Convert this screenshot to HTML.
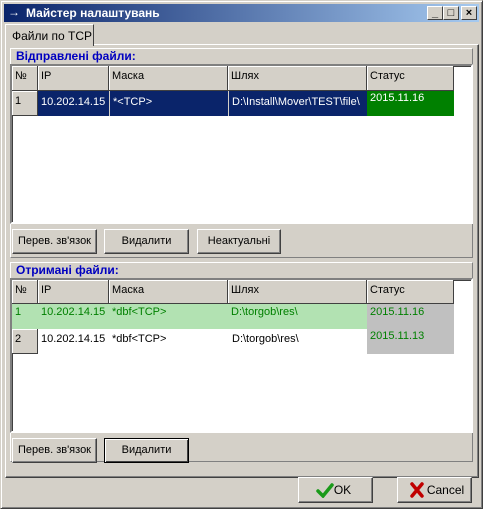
<!DOCTYPE html>
<html><head><meta charset="utf-8"><style>
*{box-sizing:border-box;margin:0;padding:0}
body{width:483px;height:509px;background:#d4d0c8;font-family:"Liberation Sans",sans-serif;font-size:11px;position:relative;overflow:hidden;color:#000}
.a{position:absolute}
.title{left:4px;top:4px;width:475px;height:18px;background:linear-gradient(to right,#0a246a,#a6caf0);color:#fff;font-weight:bold;font-size:12px;line-height:18px;padding-left:22px}
.wb{width:16px;height:14px;top:6px;background:#d4d0c8;border:1px solid;border-color:#fff #404040 #404040 #fff;color:#000;font-size:11px;font-weight:bold;text-align:center;line-height:12px}
.sunk{border:1px solid;border-color:#808080 #fff #fff #808080}
.raised{border:1px solid;border-color:#fff #404040 #404040 #fff}
.btn{background:#d4d0c8;border:1px solid;border-color:#fff #404040 #404040 #fff;text-align:center;line-height:22px;height:25px;box-shadow:inset -1px -1px #808080}
.lbl{color:#0000c0;font-weight:bold;font-size:12px}
.grid{background:#fff;border:2px solid;border-color:#808080 #fff #fff #808080;box-shadow:inset 1px 1px #404040}
.c{position:absolute;padding-left:3px;white-space:nowrap;overflow:hidden;line-height:20px}
.h{background:#d4d0c8;border-right:1px solid #404040;border-bottom:1px solid #404040;box-shadow:inset 1px 1px #fff}
</style></head><body>
<div class="a" style="left:0;top:0;width:483px;height:509px;border:1px solid;border-color:#d4d0c8 #404040 #404040 #d4d0c8;box-shadow:inset 1px 1px #fff,inset -1px -1px #808080"></div>
<div class="a title">Майстер налаштувань</div>
<div class="a" style="left:8px;top:5px;color:#fff;font-weight:bold;font-size:12px">→</div>
<div class="a wb" style="left:427px">_</div>
<div class="a wb" style="left:443px">□</div>
<div class="a wb" style="left:461px">×</div>
<!-- tab page -->
<div class="a" style="left:5px;top:44px;width:474px;height:434px;border:1px solid;border-color:#fff #404040 #404040 #fff;box-shadow:inset -1px -1px #808080"></div>
<div class="a" style="left:5px;top:24px;width:89px;height:22px;background:#d4d0c8;border:1px solid;border-color:#fff #404040 transparent #fff;border-bottom:none;padding:4px 0 0 6px;font-size:12px">Файли по TCP</div>
<!-- group 1 -->
<div class="a" style="left:10px;top:48px;width:463px;height:210px;border:1px solid;border-color:#fff #808080 #808080 #fff"></div>
<div class="a lbl" style="left:16px;top:49px">Відправлені файли:</div>
<div class="a grid" style="left:10px;top:64px;width:463px;height:160px">
<div class="c h" style="left:0;top:0;width:26px;height:25px">№</div>
<div class="c h" style="left:26px;top:0;width:71px;height:25px">IP</div>
<div class="c h" style="left:97px;top:0;width:119px;height:25px">Маска</div>
<div class="c h" style="left:216px;top:0;width:139px;height:25px">Шлях</div>
<div class="c h" style="left:355px;top:0;width:87px;height:25px">Статус</div>
<div class="c h" style="left:0;top:25px;width:26px;height:25px">1</div>
<div class="c" style="left:26px;top:25px;width:71px;height:25px;background:#0a246a;color:#fff;line-height:22px">10.202.14.15</div>
<div class="c" style="left:97px;top:25px;width:119px;height:25px;background:#0a246a;color:#fff;border-left:1px solid #d4d0c8;line-height:22px">*&lt;TCP&gt;</div>
<div class="c" style="left:216px;top:25px;width:139px;height:25px;background:#0a246a;color:#fff;border-left:1px solid #d4d0c8;line-height:22px">D:\Install\Mover\TEST\file\</div>
<div class="c" style="left:355px;top:25px;width:87px;height:25px;background:#008000;color:#fff;line-height:14px">2015.11.16</div>
</div>
<div class="a btn" style="left:12px;top:229px;width:85px">Перев. зв'язок</div>
<div class="a btn" style="left:104px;top:229px;width:85px">Видалити</div>
<div class="a btn" style="left:197px;top:229px;width:84px">Неактуальні</div>
<!-- group 2 -->
<div class="a" style="left:10px;top:262px;width:463px;height:200px;border:1px solid;border-color:#fff #808080 #808080 #fff"></div>
<div class="a lbl" style="left:16px;top:263px">Отримані файли:</div>
<div class="a grid" style="left:10px;top:278px;width:463px;height:155px">
<div class="c h" style="left:0;top:0;width:26px;height:24px">№</div>
<div class="c h" style="left:26px;top:0;width:71px;height:24px">IP</div>
<div class="c h" style="left:97px;top:0;width:119px;height:24px">Маска</div>
<div class="c h" style="left:216px;top:0;width:139px;height:24px">Шлях</div>
<div class="c h" style="left:355px;top:0;width:87px;height:24px">Статус</div>
<div class="c" style="left:0;top:24px;width:355px;height:25px;background:#b2e2b2"></div>
<div class="c" style="left:0;top:24px;width:26px;height:25px;color:#008000;line-height:16px">1</div>
<div class="c" style="left:26px;top:24px;width:71px;height:25px;color:#008000;line-height:16px">10.202.14.15</div>
<div class="c" style="left:97px;top:24px;width:119px;height:25px;color:#008000;line-height:16px">*dbf&lt;TCP&gt;</div>
<div class="c" style="left:216px;top:24px;width:139px;height:25px;color:#008000;line-height:16px">D:\torgob\res\</div>
<div class="c" style="left:355px;top:24px;width:87px;height:50px;background:#c0c0c0"></div>
<div class="c" style="left:355px;top:24px;width:87px;height:25px;color:#008000;line-height:16px">2015.11.16</div>
<div class="c h" style="left:0;top:49px;width:26px;height:25px">2</div>
<div class="c" style="left:26px;top:49px;width:71px;height:25px">10.202.14.15</div>
<div class="c" style="left:97px;top:49px;width:119px;height:25px">*dbf&lt;TCP&gt;</div>
<div class="c" style="left:216px;top:49px;width:139px;height:25px;padding-left:4px">D:\torgob\res\</div>
<div class="c" style="left:355px;top:49px;width:87px;height:25px;color:#008000;line-height:14px">2015.11.13</div>
</div>
<div class="a btn" style="left:12px;top:438px;width:85px">Перев. зв'язок</div>
<div class="a btn" style="left:104px;top:438px;width:85px;border:1px solid #000;box-shadow:inset 1px 1px #fff,inset -1px -1px #404040">Видалити</div>
<!-- OK / Cancel -->
<div class="a btn" style="left:298px;top:477px;width:75px;height:26px;line-height:24px;padding-left:14px;font-size:12px">OK</div>
<svg class="a" style="left:316px;top:482px" width="18" height="16"><path d="M2 9 L7 14 L16 3" stroke="#1a9a1a" stroke-width="3.5" fill="none" stroke-linecap="round"/></svg>
<div class="a btn" style="left:397px;top:477px;width:75px;height:26px;line-height:24px;padding-left:22px;font-size:12px">Cancel</div>
<svg class="a" style="left:409px;top:482px" width="16" height="16"><path d="M3 2 L13 14 M13 2 L3 14" stroke="#c00000" stroke-width="3.5" fill="none" stroke-linecap="round"/></svg>
</body></html>
